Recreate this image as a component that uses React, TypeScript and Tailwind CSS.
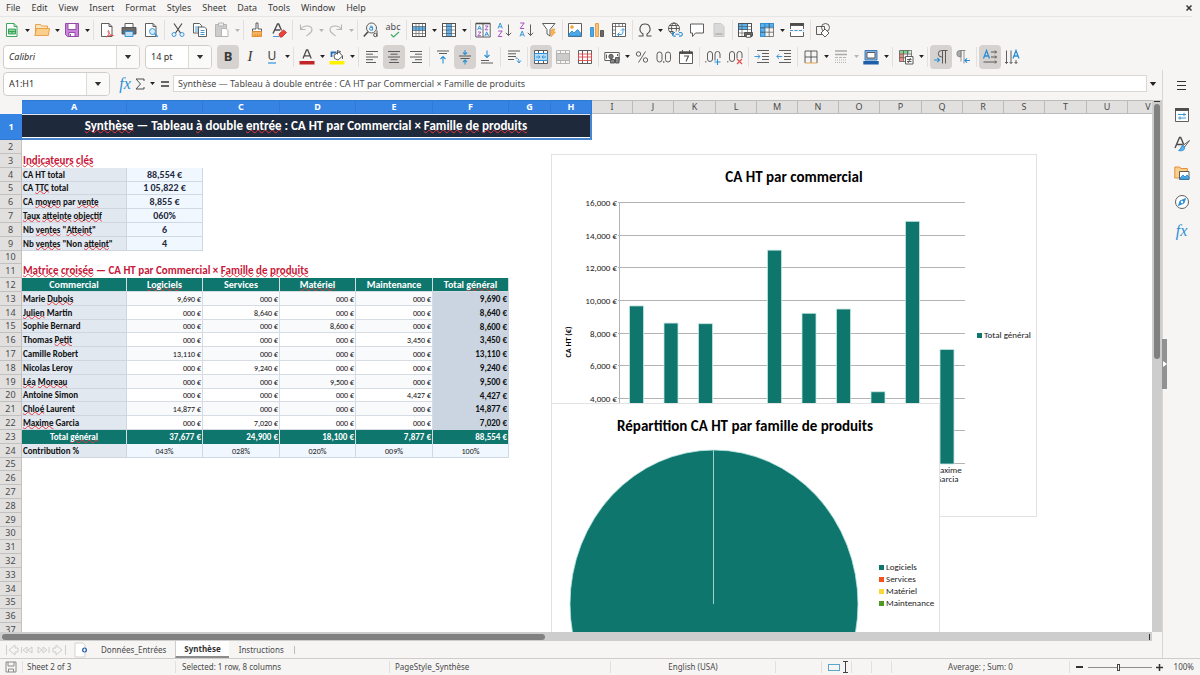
import type { ReactNode } from "react";
import { clsx } from "clsx";

type Tool = {
  label: string;
  icon: ReactNode;
  drop?: boolean;
  active?: boolean;
  disabled?: boolean;
};

const GREY = "#4d4d4d";
const BLUE = "#2a8fd6";

function Svg({ children }: { children: ReactNode }) {
  return (
    <svg viewBox="0 0 16 16" className="size-4 shrink-0" fill="none" stroke={GREY} strokeWidth="0.9">
      {children}
    </svg>
  );
}

function Caret({ className }: { className?: string }) {
  return (
    <svg viewBox="0 0 8 5" className={clsx("shrink-0", className)} fill="currentColor">
      <path d="M0 0h8L4 5z" />
    </svg>
  );
}

const GRID = "M1.5 1.5h13v13h-13zM1.5 5.8h13M1.5 10.2h13M5.8 1.5v13M10.2 1.5v13";

const STANDARD: Tool[][] = [
  [
    {
      label: "New",
      drop: true,
      icon: (
        <Svg>
          <path d="M2.5 1.5h7.5l3 3v10h-10.5z" fill="#fff" stroke="#2c9c50" />
          <path d="M10 1.5v3h3" stroke="#2c9c50" />
          <path d="M4.5 7h7v5h-7z" fill="#8fd3a0" stroke="#2c9c50" />
          <path d="M4.5 9.5h7M8 9.5v2.5" stroke="#2c9c50" />
        </Svg>
      ),
    },
    {
      label: "Open",
      drop: true,
      icon: (
        <Svg>
          <path d="M1.5 13.5v-11h5l1 1.5h6v2.5" fill="#fbe3bd" stroke="#e79a3c" />
          <path d="M.8 13.5l1.7-7h13l-1.2 7z" fill="#f9cf8b" stroke="#e79a3c" />
        </Svg>
      ),
    },
    {
      label: "Save",
      drop: true,
      icon: (
        <Svg>
          <path d="M1.5 1.5h13v13h-11l-2-2z" fill="#c884d8" stroke="#8e3fa6" />
          <path d="M4 1.5h8v6h-8z" fill="#fff" stroke="#8e3fa6" />
          <path d="M5 10.5h6v4h-6z" fill="#fff" stroke="#8e3fa6" />
          <path d="M6.5 12v2.5" stroke="#8e3fa6" />
        </Svg>
      ),
    },
  ],
  [
    {
      label: "Export as PDF",
      icon: (
        <Svg>
          <path d="M2.5 1.5h7.5l3 3v10h-10.5z" fill="#fff" />
          <path d="M10 1.5v3h3" />
          <path d="M7 15c3-2 4-5 2.5-6.5-1.5 0 0 4.5 5 5-2.5-.5-5.500 0-7.500 1.500z" fill="#fff" stroke="#e04a4a" />
        </Svg>
      ),
    },
    {
      label: "Print",
      icon: (
        <Svg>
          <path d="M4 5v-3.500h8v3.500" fill="#fff" />
          <path d="M1 5.500h14v6.500h-14z" fill="#6a6a6a" />
          <path d="M4 9.500h8v5h-8z" fill="#bfe0f5" stroke={BLUE} />
        </Svg>
      ),
    },
    {
      label: "Print Preview",
      icon: (
        <Svg>
          <path d="M2.500 1.500h7.500l3 3v10h-10.500z" fill="#fff" />
          <path d="M10 1.500v3h3" />
          <circle cx="9.500" cy="9.500" r="3" fill="#d7ecfa" stroke={BLUE} />
          <path d="M11.700 11.700l3 3" stroke={BLUE} strokeWidth="1.400" />
        </Svg>
      ),
    },
  ],
  [
    {
      label: "Cut",
      icon: (
        <Svg>
          <path d="M4 1.500l6.500 9.500M12 1.500l-6.500 9.500" strokeWidth="1.200" />
          <circle cx="4" cy="12.500" r="2" stroke={BLUE} />
          <circle cx="12" cy="12.500" r="2" stroke={BLUE} />
        </Svg>
      ),
    },
    {
      label: "Copy",
      icon: (
        <Svg>
          <path d="M1.500 1.500h6l2 2v7.500h-8z" fill="#fff" />
          <path d="M3 5h4M3 7h3M3 9h3" stroke={BLUE} />
          <path d="M6.500 5h6l2 2v7.500h-8z" fill="#fff" />
          <path d="M8.500 8.500h4M8.500 10.500h4M8.500 12.500h4" stroke={BLUE} />
        </Svg>
      ),
    },
    {
      label: "Paste",
      drop: true,
      disabled: true,
      icon: (
        <Svg>
          <path d="M1.500 2.500h11v12h-11z" fill="#ccc" stroke="#b0b0b0" />
          <path d="M4.500 1h5v3h-5z" fill="#eee" stroke="#b0b0b0" />
          <path d="M7.500 6.500h4.500l2 2v6h-6.500z" fill="#fff" stroke="#b0b0b0" />
        </Svg>
      ),
    },
  ],
  [
    {
      label: "Clone Formatting",
      icon: (
        <Svg>
          <path d="M7 1h2v6h3.500v2.500h-9v-2.500h3.500z" fill="#fff" />
          <path d="M3.500 9.500h9v5h-9.500z" fill="#f6b35f" stroke="#e0892c" />
          <path d="M6 12v2.500M8.500 12v2.500M11 12v2.500" stroke="#e0892c" />
        </Svg>
      ),
    },
    {
      label: "Clear Direct Formatting",
      icon: (
        <Svg>
          <path d="M2 11.500l4.500-9.500h1.200l2.800 6.500M4 8h5" strokeWidth="1.400" />
          <path d="M2 14.500h6" stroke={BLUE} />
          <path d="M8 12l4.500-4 3 2.500-4.500 4.500h-2z" fill="#e8453c" stroke="#d03030" />
        </Svg>
      ),
    },
  ],
  [
    {
      label: "Undo",
      drop: true,
      disabled: true,
      icon: (
        <Svg>
          <path d="M2.500 2.500v5h5M2.500 7.500c3-5 11-4.500 11.500 0 .3 3-3 4-5.500 6.500" stroke="#b5b5b5" strokeWidth="1.100" />
        </Svg>
      ),
    },
    {
      label: "Redo",
      drop: true,
      disabled: true,
      icon: (
        <Svg>
          <path d="M13.500 2.500v5h-5M13.500 7.500c-3-5-11-4.500-11.500 0-.3 3 3 4 5.500 6.500" stroke="#b5b5b5" strokeWidth="1.100" />
        </Svg>
      ),
    },
  ],
  [
    {
      label: "Find and Replace",
      icon: (
        <Svg>
          <circle cx="8.500" cy="6" r="5" />
          <path d="M5 9.800l-4.200 4.700" strokeWidth="1.600" />
          <circle cx="8" cy="6.800" r="1.500" stroke={BLUE} />
          <path d="M6.800 4.200h2.200l.6.800v3.500" stroke={BLUE} />
          <circle cx="12.300" cy="13" r="1.700" />
          <path d="M14 8.500v6.300" />
        </Svg>
      ),
    },
    {
      label: "Spelling",
      icon: (
        <span className="flex flex-col items-center font-['Noto_Sans'] text-[9px] leading-[8px] text-[#4d4d4d]">
          abc
          <svg viewBox="0 0 10 7" className="h-[7px] w-[10px] self-end" fill="none" stroke="#3aaa63" strokeWidth="1.200">
            <path d="M1 3.500l2.500 2.500 5.500-5" />
          </svg>
        </span>
      ),
    },
  ],
  [
    {
      label: "Row",
      drop: true,
      icon: (
        <Svg>
          <path d="M1.500 1.500h13v13h-13z" fill="#fff" />
          <path d="M1.500 4.500h13v4h-13z" fill="#5db2ee" stroke="none" />
          <path d="M1.500 4.500h13M1.500 8.500h13M1.500 11.500h13M5 1.500v13M8 1.500v13M11.500 1.500v13" strokeWidth="0.600" />
          <path d="M1.500 1.500h13v13h-13z" />
        </Svg>
      ),
    },
    {
      label: "Column",
      drop: true,
      icon: (
        <Svg>
          <path d="M1.500 1.500h13v13h-13z" fill="#fff" />
          <path d="M5.500 1.500h5v13h-5z" fill="#5db2ee" stroke="none" />
          <path d="M1.500 4.500h13M1.500 8h13M1.500 11.500h13M5.500 1.500v13M10.500 1.500v13" strokeWidth="0.600" />
          <path d="M1.500 1.500h13v13h-13z" />
        </Svg>
      ),
    },
  ],
  [
    {
      label: "Sort",
      icon: (
        <Svg>
          <path d="M.8 1.500h14.400v13.500h-14.400zM8 1.500v13.500" fill="#fff" />
          <path d="M.8 1.500h14.400" strokeWidth="1.600" />
          <path d="M2.600 8l1.900-4.200 1.900 4.200M3.300 6.700h2.400M9.800 14l1.900-4.200 1.900 4.200M10.500 12.700h2.400" stroke={BLUE} />
          <path d="M2.800 10h3.200l-3.200 3.800h3.200M10 4h3.200l-3.200 3.800h3.200" stroke="#a23fc0" />
        </Svg>
      ),
    },
    {
      label: "Sort Ascending",
      icon: (
        <Svg>
          <path d="M1 6.500l2.200-5.500 2.200 5.500M1.800 4.800h2.900" stroke={BLUE} />
          <path d="M1.200 9h4l-4 5.500h4" stroke="#a23fc0" />
          <path d="M11.500 2.500v11M8.800 10.800l2.700 2.700 2.700-2.700" />
        </Svg>
      ),
    },
    {
      label: "Sort Descending",
      icon: (
        <Svg>
          <path d="M1 14.500l2.200-5.500 2.200 5.500M1.800 12.800h2.900" stroke={BLUE} />
          <path d="M1.200 1h4l-4 5.500h4" stroke="#a23fc0" />
          <path d="M11.500 2.500v11M8.800 10.800l2.700 2.700 2.700-2.700" />
        </Svg>
      ),
    },
    {
      label: "AutoFilter",
      icon: (
        <Svg>
          <path d="M1.500 1.500h12.500l-5 6v6.500l-3-2v-4.500z" fill="#fff" />
          <path d="M11 7h3l-1.500 3h2l-4.500 5 1-4h-1.500z" fill="#f9b552" stroke="#ec9a2f" strokeWidth="0.600" />
        </Svg>
      ),
    },
  ],
  [
    {
      label: "Image",
      icon: (
        <Svg>
          <path d="M1.500 1.500h13v13h-13z" fill="#fff" />
          <circle cx="5" cy="5" r="1.300" fill="#f9b552" stroke="#ec9a2f" />
          <path d="M2 12l3-3 2 2 3.500-3.500 3.500 4v2.500h-12z" fill="#4fa8e4" stroke={BLUE} />
        </Svg>
      ),
    },
    {
      label: "Chart",
      icon: (
        <Svg>
          <path d="M1.500 5.500h3v9h-3z" fill="#4fa8e4" stroke={BLUE} />
          <path d="M6.500 1.500h3v13h-3z" fill="#f9c27a" stroke="#e79a3c" />
          <path d="M11.500 8.500h3v6h-3z" fill="#6a6a6a" />
        </Svg>
      ),
    },
    {
      label: "Pivot Table",
      icon: (
        <Svg>
          <path d="M1.500 1.500h13v13h-13z" fill="#fff" />
          <path d="M1.500 4.500h13M4.500 1.500v13M8 1.500v3M11.500 1.500v3M1.500 8h3M1.500 11.500h3" strokeWidth="0.700" />
          <path d="M7 12.500h3c2 0 2-2 2-5.500M10 8.500l2-2 2 2M8.500 10.500l-2 2 2 2" stroke={BLUE} />
        </Svg>
      ),
    },
  ],
  [
    {
      label: "Special Character",
      drop: true,
      icon: (
        <Svg>
          <path d="M1.500 14h4.500v-2c-5-3-3.500-10 2-10s7 7 2 10v2h4.500" strokeWidth="1.100" />
        </Svg>
      ),
    },
    {
      label: "Hyperlink",
      icon: (
        <Svg>
          <circle cx="7" cy="6.500" r="5.500" />
          <ellipse cx="7" cy="6.500" rx="2.500" ry="5.500" />
          <path d="M1.500 6.500h11M2.500 3.500h9M2.500 9.500h4" />
          <path d="M7 9.500h8v6h-8z" fill="#f6f5f4" stroke="none" />
          <path d="M8 10.500h-.8a1.800 1.800 0 0 0 0 3.600h1.500M12 10.500h1.500a1.800 1.800 0 0 1 0 3.600h-1.500M8.500 12.300h4" stroke={BLUE} strokeWidth="1.100" />
        </Svg>
      ),
    },
    {
      label: "Comment",
      icon: (
        <Svg>
          <path d="M1.500 2h13v9h-8l-3 3.500v-3.500h-2z" fill="#fff" />
        </Svg>
      ),
    },
    {
      label: "Headers and Footers",
      disabled: true,
      icon: (
        <Svg>
          <path d="M3 1.500h7l3 3v10h-10z" fill="#d9d9d9" stroke="#c4c4c4" />
          <path d="M4.500 11h7v2h-7z" fill="#bbb" stroke="none" />
        </Svg>
      ),
    },
  ],
  [
    {
      label: "Define Print Area",
      icon: (
        <Svg>
          <path d="M1.500 1.500h13v13h-13z" fill="#fff" />
          <path d="M1.500 1.500h9v6h-9z" fill="#5db2ee" stroke={BLUE} />
          <path d="M1.500 4.500h13M1.500 7.500h13M1.500 11h13M5 1.500v13M10.500 1.500v13" strokeWidth="0.600" />
          <path d="M1.500 1.500h13v13h-13z" />
          <path d="M7.500 10.500h8v3.500h-8z" fill="#6a6a6a" />
          <path d="M9.300 12.500h4.400v2.800h-4.400z" fill="#fff" />
        </Svg>
      ),
    },
    {
      label: "Freeze Rows and Columns",
      drop: true,
      icon: (
        <Svg>
          <path d={GRID} strokeWidth="0.700" />
          <path d="M1.500 1.500h4.300v13h-4.300zM5.800 1.500h8.700v3.500h-8.700z" fill="#5db2ee" stroke={BLUE} />
          <path d="M1.500 5.800h4.300M1.500 10.200h4.300M10.200 1.500v4" />
        </Svg>
      ),
    },
    {
      label: "Split Window",
      icon: (
        <Svg>
          <path d="M1.500 1.500h13v13h-13z" fill="#fff" />
          <path d="M1.500 1.500h13v2h-13z" fill={GREY} />
          <path d="M0 8.500h16" stroke="#f6f5f4" strokeWidth="3" />
          <path d="M1 8.500h14" stroke={BLUE} strokeDasharray="3 1.500" />
        </Svg>
      ),
    },
  ],
  [
    {
      label: "Show Draw Functions",
      icon: (
        <Svg>
          <path d="M1.500 4.500h8v8h-8z" />
          <circle cx="10.500" cy="5.500" r="4" />
          <path d="M10 7l4 4-4 4-4-4z" fill="#fff" />
        </Svg>
      ),
    },
  ],
];

const FORMATTING: Tool[][] = [
  [
    {
      label: "Bold",
      active: true,
      icon: <span className="text-[13px] font-bold text-[#3a3a3a]">B</span>,
    },
    { label: "Italic", icon: <span className="font-['Liberation_Serif'] text-[15px] text-[#3a3a3a] italic">I</span> },
    {
      label: "Underline",
      drop: true,
      icon: <span className="border-b-2 border-[#7dbbe8] text-[12px] leading-[13px] text-[#3a3a3a]">U</span>,
    },
  ],
  [
    {
      label: "Font Color",
      drop: true,
      icon: (
        <Svg>
          <path d="M4 9.500l3.500-8.500h1.200l3.500 8.500M5.300 6.800h5.600" strokeWidth="1.300" />
          <path d="M.5 12h15v3.500h-15z" fill="#c22525" stroke="none" />
        </Svg>
      ),
    },
    {
      label: "Background Color",
      drop: true,
      icon: (
        <Svg>
          <path d="M5 6l5-3 3.500 4-4.500 4-3.500-1.500z" fill="#fff" />
          <path d="M8.500 5.500v-4l3.500 1.500M13.500 7v3" />
          <path d="M2.500 8v-4.500h5" stroke="#2f6fb5" strokeWidth="1.800" />
          <path d="M.5 12h15v3.500h-15z" fill="#fff200" stroke="none" />
        </Svg>
      ),
    },
  ],
  [
    {
      label: "Align Left",
      icon: (
        <Svg>
          <path d="M2 2.500h12M2 5.200h7M2 8h12M2 10.700h7M2 13.500h10" />
        </Svg>
      ),
    },
    {
      label: "Center Horizontally",
      active: true,
      icon: (
        <Svg>
          <path d="M2 2.500h12M4.500 5.200h7M2 8h12M4.500 10.700h7M3 13.500h10" />
        </Svg>
      ),
    },
    {
      label: "Align Right",
      icon: (
        <Svg>
          <path d="M2 2.500h12M7 5.200h7M2 8h12M7 10.700h7M4 13.500h10" />
        </Svg>
      ),
    },
  ],
  [
    {
      label: "Align Top",
      icon: (
        <Svg>
          <path d="M2 2h12M4 4.500h8" />
          <path d="M8 14.500v-7M5.500 10l2.500-2.500 2.500 2.500" stroke={BLUE} strokeWidth="1.100" />
        </Svg>
      ),
    },
    {
      label: "Center Vertically",
      active: true,
      icon: (
        <Svg>
          <path d="M2 7h12M3.500 9.500h9" />
          <path d="M8 1v4.500M6 3.500l2 2 2-2M8 15.500v-4.500M6 13l2-2 2 2" stroke={BLUE} strokeWidth="1.100" />
        </Svg>
      ),
    },
    {
      label: "Align Bottom",
      icon: (
        <Svg>
          <path d="M2 14h12M2 11.500h8" />
          <path d="M8 1.500v7M5.500 6l2.500 2.500 2.500-2.500" stroke={BLUE} strokeWidth="1.100" />
        </Svg>
      ),
    },
  ],
  [
    {
      label: "Wrap Text",
      icon: (
        <Svg>
          <path d="M2 2h12M2 4.800h8M2 7.500h8M2 10.500h6" />
          <path d="M9.500 9c3 0 3.500 1.500 3.500 4.500M11 11.500l2 2.500 2-2.500" stroke={BLUE} />
        </Svg>
      ),
    },
  ],
  [
    {
      label: "Merge and Center Cells",
      active: true,
      icon: (
        <Svg>
          <path d="M1.500 1.500h13v13h-13zM1.500 4.500h13M1.500 11.500h13M5.500 1.500v3M10.500 1.500v3M5.500 11.500v3M10.500 11.500v3" fill="#fff" />
          <path d="M1.500 4.500h13v7h-13z" fill="#b9dcf5" stroke={BLUE} />
          <path d="M3 8h4M9 8h4M5.500 6.500l1.500 1.500-1.500 1.500M10.500 6.500l-1.500 1.500 1.500 1.500" stroke={BLUE} />
        </Svg>
      ),
    },
    {
      label: "Merge Cells",
      disabled: true,
      icon: (
        <Svg>
          <path d="M1.500 1.500h13v13h-13zM1.500 4.500h13M1.500 11.500h13M5.500 1.500v3M10.500 1.500v3M5.500 11.500v3M10.500 11.500v3" stroke="#b0b0b0" />
          <path d="M1.500 4.500h13v7h-13z" fill="#ccc" stroke="#b0b0b0" />
        </Svg>
      ),
    },
    {
      label: "Unmerge Cells",
      icon: (
        <Svg>
          <path d="M1.500 1.500h13v13h-13zM5.500 1.500v13M10.500 1.500v13" fill="#fff" />
          <path d="M1.500 5h13v6.500h-13zM5.500 5v6.500M10.500 5v6.500M1.500 8h13" stroke="#e04a4a" />
        </Svg>
      ),
    },
  ],
  [
    {
      label: "Format as Currency",
      drop: true,
      icon: (
        <Svg>
          <path d="M.8 3.500h14.400v8h-14.400z" fill="#fff" />
          <circle cx="7" cy="7.500" r="2.200" fill="#777" />
          <path d="M2.500 5.500v4M13.500 5v2" />
          <path d="M6.500 10.500h4v3.500h-4zM11.500 8.500h3.500v5.500h-3.500z" fill="#888" />
        </Svg>
      ),
    },
    {
      label: "Format as Percent",
      icon: (
        <Svg>
          <circle cx="4.500" cy="5" r="2.200" />
          <circle cx="11.500" cy="11" r="2.200" />
          <path d="M11.500 2.500l-7 11" />
        </Svg>
      ),
    },
    {
      label: "Format as Number",
      icon: (
        <Svg>
          <rect x="1" y="3" width="5" height="10" rx="2.500" />
          <rect x="9.500" y="3" width="5" height="10" rx="2.500" />
          <path d="M7.800 12v2" />
        </Svg>
      ),
    },
    {
      label: "Format as Date",
      icon: (
        <Svg>
          <path d="M1.500 3h13v11.500h-13z" fill="#fff" />
          <path d="M1.500 3h13v1.500h-13zM4.500 1v2M11.500 1v2" fill={GREY} />
          <path d="M6 7h4.500l-2.500 5.500" strokeWidth="1.100" />
        </Svg>
      ),
    },
  ],
  [
    {
      label: "Add Decimal Place",
      icon: (
        <Svg>
          <path d="M.8 12v1.500" />
          <rect x="2.500" y="2.500" width="5" height="10" rx="2.500" />
          <path d="M10 11.500v-6.500a2.500 2.500 0 0 1 5 0v4" />
          <path d="M9.500 13h6M12.500 10v6" stroke={BLUE} strokeWidth="1.100" />
        </Svg>
      ),
    },
    {
      label: "Delete Decimal Place",
      icon: (
        <Svg>
          <path d="M.8 12v1.500" />
          <rect x="2.500" y="2.500" width="5" height="10" rx="2.500" />
          <path d="M10 9.500v-4.500a2.500 2.500 0 0 1 5 0v4" />
          <path d="M10 10l5 5M15 10l-5 5" stroke="#e04a4a" strokeWidth="1.100" />
        </Svg>
      ),
    },
  ],
  [
    {
      label: "Increase Indent",
      icon: (
        <Svg>
          <path d="M3 1.500h12M8 4.500h7M8 7.500h7M8 10.500h7M3 13.500h12" />
          <path d="M.5 7.500h5.500M3.800 5.300l2.200 2.200-2.200 2.200" stroke={BLUE} />
        </Svg>
      ),
    },
    {
      label: "Decrease Indent",
      icon: (
        <Svg>
          <path d="M3 1.500h12M8 4.500h7M8 7.500h7M8 10.500h7M3 13.500h12" />
          <path d="M.8 7.500h5.500M3 5.300l-2.200 2.200 2.200 2.200" stroke={BLUE} />
        </Svg>
      ),
    },
  ],
  [
    {
      label: "Borders",
      drop: true,
      icon: (
        <Svg>
          <path d="M2 2h12v12M2 2v12M8 2v12M2 8h12" />
          <path d="M2 14h12" stroke="#e79a3c" />
        </Svg>
      ),
    },
    {
      label: "Border Style",
      drop: true,
      disabled: true,
      icon: (
        <Svg>
          <path d="M2 2h12M2 5.500h12" stroke="#aaa" strokeWidth="1.400" />
          <path d="M2 8.500h12" stroke="#aaa" strokeDasharray="3 1" />
          <path d="M2 11h12M2 13.500h12" stroke="#aaa" strokeDasharray="1 1" />
        </Svg>
      ),
    },
    {
      label: "Border Color",
      drop: true,
      icon: (
        <Svg>
          <path d="M2 1.500h12v9.500h-12z" fill="#8bb4dd" stroke="#2f6fb5" />
          <path d="M4 3.500h8v5.500h-8z" fill="#fff" />
          <path d="M.3 12h15.400v3.500h-15.400z" fill="#1d5fa8" stroke="none" />
        </Svg>
      ),
    },
  ],
  [
    {
      label: "Conditional",
      drop: true,
      icon: (
        <Svg>
          <path d="M1.500 1.500h10v3h-10z" fill="#7ed08c" stroke="none" />
          <path d="M1.500 4.500h3.500v8h-3.500z" fill="#f08a80" stroke="none" />
          <path d="M1.500 1.500h12v11h-12zM1.500 5h12M1.500 8.700h12M5.500 1.500v11M9.500 1.500v11" strokeWidth="0.700" />
          <path d="M7.500 7.500h7.500v7.500h-7.500z" fill="#fff" />
          <path d="M9 10.500h4.500M9 12.500h4.500M12.500 9l-2.500 5" />
        </Svg>
      ),
    },
  ],
  [
    {
      label: "Left-To-Right",
      active: true,
      icon: (
        <Svg>
          <path d="M14.500 1.500h-6a3.200 3.200 0 0 0 0 6.400h1M9.500 1.500v13M12.500 1.500v13" />
          <path d="M1 11h5.500M4.300 8.800l2.200 2.200-2.200 2.200" stroke={BLUE} strokeWidth="1.100" />
        </Svg>
      ),
    },
    {
      label: "Right-To-Left",
      icon: (
        <Svg>
          <path d="M9 1.500h-4a3.200 3.200 0 0 0 0 6.400h1v-6.400" fill="#aaa" stroke="#888" />
          <path d="M10.500 1.500h-5.500M6 1.500v11M9 1.500v13" stroke="#888" />
          <path d="M15 11.500h-5M12 9.300l-2.200 2.200 2.200 2.200" stroke={BLUE} strokeWidth="1.100" />
        </Svg>
      ),
    },
  ],
  [
    {
      label: "Text direction from left to right",
      active: true,
      icon: (
        <Svg>
          <path d="M1.500 9.500l3-8 3 8M2.500 7h4" stroke={BLUE} strokeWidth="1.300" />
          <path d="M9 3h5.500M13 1.500l1.500 1.500-1.500 1.500M9 8h5.500M13 6.500l1.500 1.500-1.500 1.500M1.500 13h13M13 11.500l1.500 1.500-1.500 1.500" />
        </Svg>
      ),
    },
    {
      label: "Text direction from top to bottom",
      icon: (
        <Svg>
          <path d="M9 9.500l3-8 3 8M10 7h4" stroke={BLUE} strokeWidth="1.300" />
          <path d="M2.500 1.500v13M1 13l1.500 1.500 1.500-1.500M7 1.500v13M5.500 13l1.500 1.500 1.500-1.500M12 11v3.500M10.500 13l1.500 1.500 1.500-1.500" />
        </Svg>
      ),
    },
  ],
];

const MENUS = ["File", "Edit", "View", "Insert", "Format", "Styles", "Sheet", "Data", "Tools", "Window", "Help"];

// Words between underscores are flagged by the spell checker
const KPIS: [string, string][] = [
  ["CA HT total", "88,554 €"],
  ["CA _TTC_ total", "1 05,822 €"],
  ["CA _moyen_ par _vente_", "8,855 €"],
  ["_Taux_ _atteinte_ _objectif_", "060%"],
  ['Nb _ventes_ "_Atteint_"', "6"],
  ['Nb _ventes_ "Non _atteint_"', "4"],
];

const FAMILIES = ["_Logiciels_", "Services", "_Matériel_", "Maintenance", "Total _général_"];

const SALES: [string, ...string[]][] = [
  ["Marie _Dubois_", "9,690 €", "000 €", "000 €", "000 €", "9,690 €"],
  ["_Julien_ Martin", "000 €", "8,640 €", "000 €", "000 €", "8,640 €"],
  ["Sophie Bernard", "000 €", "000 €", "8,600 €", "000 €", "8,600 €"],
  ["Thomas _Petit_", "000 €", "000 €", "000 €", "3,450 €", "3,450 €"],
  ["Camille Robert", "13,110 €", "000 €", "000 €", "000 €", "13,110 €"],
  ["Nicolas Leroy", "000 €", "9,240 €", "000 €", "000 €", "9,240 €"],
  ["_Léa_ _Moreau_", "000 €", "000 €", "9,500 €", "000 €", "9,500 €"],
  ["Antoine Simon", "000 €", "000 €", "000 €", "4,427 €", "4,427 €"],
  ["_Chloé_ Laurent", "14,877 €", "000 €", "000 €", "000 €", "14,877 €"],
  ["_Maxime_ Garcia", "000 €", "7,020 €", "000 €", "000 €", "7,020 €"],
];

const TOTALS = ["37,677 €", "24,900 €", "18,100 €", "7,877 €", "88,554 €"];
const SHARES = ["043%", "028%", "020%", "009%", "100%"];
const BAR_VALUES = [9690, 8640, 8600, 3450, 13110, 9240, 9500, 4427, 14877, 7020];

const COLUMNS = "ABCDEFGHIJKLMNOPQRSTUV".split("");
const COLUMN_WIDTHS = [105, 76, 77, 76, 77, 76, 42, 41, 41, 41, 42, 41, 41, 41, 41, 42, 41, 41, 41, 42, 41, 41];

function ToolButton({ tool }: { tool: Tool }) {
  return (
    <div className="flex items-center">
      <button
        aria-label={tool.label}
        disabled={tool.disabled}
        className={clsx(
          "flex h-6 w-[22px] items-center justify-center rounded",
          tool.active && "bg-[#d5d2cf]",
        )}
      >
        {tool.icon}
      </button>
      {tool.drop && (
        <button
          aria-label={`${tool.label} options`}
          disabled={tool.disabled}
          className={clsx("flex h-6 w-2 items-center justify-center", tool.disabled ? "text-[#b5b5b5]" : "text-[#222]")}
        >
          <Caret className="h-[3px] w-[5px]" />
        </button>
      )}
    </div>
  );
}

function ToolGroups({ groups }: { groups: Tool[][] }) {
  return (
    <>
      {groups.map((group, i) => (
        <div key={i} className="flex items-center">
          {i > 0 && (
            <span className={clsx("flex justify-center", i > 5 && groups === STANDARD ? "w-1" : "w-[5px]")}>
              <span className="h-5 w-px bg-[#e2e0de]" />
            </span>
          )}
          {group.map((tool) => (
            <ToolButton key={tool.label} tool={tool} />
          ))}
        </div>
      ))}
    </>
  );
}

function Combo({ label, value, className, italic }: { label: string; value: string; className: string; italic?: boolean }) {
  return (
    <div className={clsx("flex h-6 shrink-0 overflow-hidden rounded border border-[#d0cdca] bg-white", className)}>
      <input
        aria-label={label}
        defaultValue={value}
        className={clsx("min-w-0 flex-1 pl-[5px] text-[9px] text-[#2e2e2e] outline-none", italic && "italic")}
      />
      <button
        aria-label={`${label} list`}
        className="flex w-[23px] items-center justify-center border-l border-[#dddad7] bg-[#fafaf9] text-[#333]"
      >
        <Caret className="h-1 w-2" />
      </button>
    </div>
  );
}

function Spell({ text }: { text: string }) {
  return (
    <>
      {text.split("_").map((part, i) =>
        i % 2 === 1 ? (
          <span key={i} className="underline decoration-[#e5393f] decoration-wavy decoration-1 underline-offset-[-1px] [text-decoration-skip-ink:none]">
            {part}
          </span>
        ) : (
          part
        ),
      )}
    </>
  );
}

function Cell({ text, className, span }: { text: string; className?: string; span?: number }) {
  return (
    <td colSpan={span} className={clsx("overflow-hidden p-0 leading-[12px] whitespace-nowrap", className)}>
      <Spell text={text} />
    </td>
  );
}

function rowCells(row: number) {
  if (row === 3)
    return <Cell span={6} text="_Indicateurs_ _clés_" className="pl-px text-[11px] font-bold text-[#c8173a]" />;
  if (row >= 4 && row <= 9) {
    const [label, value] = KPIS[row - 4];
    return (
      <>
        <Cell text={label} className="border-r border-b border-[#cfd6e0] bg-[#e2e8f0] pl-px text-[9px] font-bold text-[#111]" />
        <Cell text={value} className="border-r border-b border-[#cfd9e6] bg-[#f0f7ff] text-center text-[10px] font-bold text-[#1e293b]" />
      </>
    );
  }
  if (row === 11)
    return (
      <Cell
        span={6}
        text="_Matrice_ _croisée_ — CA HT par Commercial × _Famille_ _de_ _produits_"
        className="pl-px text-[11px] font-bold text-[#c8173a]"
      />
    );
  if (row === 12)
    return (
      <>
        {["Commercial", ...FAMILIES].map((name) => (
          <Cell key={name} text={name} className="border-r border-b border-[#d5dde3] bg-[#0f766e] text-center text-[10px] font-bold text-white" />
        ))}
      </>
    );
  if (row >= 13 && row <= 22) {
    const [name, ...values] = SALES[row - 13];
    return (
      <>
        <Cell text={name} className="border-r border-b border-[#cfd6e0] bg-[#e2e8f0] pl-px text-[9px] font-bold text-[#111]" />
        {values.map((value, i) => (
          <Cell
            key={i}
            text={value}
            className={clsx(
              "border-r pr-px text-right text-[#111]",
              i === 4
                ? "border-[#cbd5e1] bg-[#cbd5e1] text-[9px] font-bold"
                : clsx("border-b border-[#d6dce4] text-[8px]", row % 2 ? "bg-[#f8fafc]" : "bg-white"),
            )}
          />
        ))}
      </>
    );
  }
  if (row === 23)
    return (
      <>
        <Cell text="Total _général_" className="border-r border-[#d5dde3] bg-[#0f766e] text-center text-[9px] font-bold text-white" />
        {TOTALS.map((value) => (
          <Cell key={value} text={value} className="border-r border-[#d5dde3] bg-[#0f766e] pr-px text-right text-[9px] font-bold text-white" />
        ))}
      </>
    );
  if (row === 24)
    return (
      <>
        <Cell text="Contribution %" className="border-r border-b border-[#cfd6e0] bg-[#e2e8f0] pl-px text-[9px] font-bold text-[#111]" />
        {SHARES.map((value) => (
          <Cell key={value} text={value} className="border-r border-b border-[#cfd9e6] bg-[#f0f7ff] text-center text-[8px] text-[#222]" />
        ))}
      </>
    );
  return null;
}

function SheetGrid() {
  return (
    <table className="w-max table-fixed border-separate border-spacing-0 font-[Carlito,Lato,sans-serif]">
      <colgroup>
        <col className="w-[22px]" />
        {COLUMN_WIDTHS.map((width, i) => (
          <col key={i} style={{ width }} />
        ))}
      </colgroup>
      <thead className="font-['Noto_Sans',sans-serif] text-[9px] leading-[12px]">
        <tr className="h-[14px]">
          <td className="bg-[#f6f5f4] p-0" />
          {COLUMNS.map((name, i) => (
            <th
              key={name}
              scope="col"
              className={clsx(
                "border-t border-r border-b p-0",
                i < 8
                  ? "border-[#2f79d2] bg-[#3584e4] font-bold text-white"
                  : "border-[#bdbbb9] bg-[#e1e0df] font-normal text-[#4a4a4a]",
              )}
            >
              {name}
            </th>
          ))}
        </tr>
      </thead>
      <tbody>
        <tr className="h-[26px]">
          <th scope="row" className="border-b border-[#2f79d2] bg-[#3584e4] p-0 font-['Noto_Sans',sans-serif] text-[9px] font-bold text-white">
            1
          </th>
          <td colSpan={8} className="border-r-2 border-b-2 border-[#4a86cf] bg-white p-0 pb-px">
            <div className="flex h-[23px] items-center justify-center border-t border-[#dfe7f2] bg-[#1e293b] text-[13px] font-bold text-white">
              <p>
                <Spell text="_Synthèse_ — Tableau _à_ double _entrée_ : CA HT par Commercial × _Famille_ _de_ _produits_" />
              </p>
            </div>
          </td>
        </tr>
        {Array.from({ length: 36 }, (_, i) => i + 2).map((row) => (
          <tr key={row} className="h-[14px] [&:nth-child(5n)]:h-[13px]">
            <th
              scope="row"
              className="border-r border-b border-[#c3c1bf] bg-[#e1e0df] p-0 font-['Noto_Sans',sans-serif] text-[9px] leading-[12px] font-normal text-[#4a4a4a]"
            >
              {row}
            </th>
            {rowCells(row)}
          </tr>
        ))}
      </tbody>
    </table>
  );
}

function BarChart() {
  const zero = 310;
  const perUnit = 261 / 16000;
  return (
    <svg viewBox="0 0 487 364" className="absolute top-[54px] left-[551px] h-[364px] w-[487px] font-[Carlito,Lato,sans-serif]">
      <rect x="0.5" y="0.5" width="485" height="362" fill="#fff" stroke="#e2e2e2" />
      <text x="243" y="28" textAnchor="middle" fontSize="15" fontWeight="700">
        CA HT par commercial
      </text>
      {Array.from({ length: 9 }, (_, i) => {
        const y = Math.round(zero - i * 2000 * perUnit) - 0.5;
        return (
          <g key={i}>
            <path d={`M67 ${y}H414`} stroke="#b3b3b3" />
            <text x="66" y={y + 3} textAnchor="end" fontSize="9" fill="#222">
              {(i * 2000).toLocaleString("en-US")} €
            </text>
          </g>
        );
      })}
      <path d="M68.5 49V310" stroke="#b3b3b3" />
      {BAR_VALUES.map((value, i) => (
        <rect
          key={i}
          x={78.5 + i * 34.5}
          y={zero - value * perUnit}
          width="14"
          height={value * perUnit}
          fill="#0f766e"
          stroke="#c3e6e2"
          strokeWidth="0.8"
        />
      ))}
      <text transform="translate(20 188) rotate(-90)" textAnchor="middle" fontSize="8" fontWeight="700">
        CA HT (€)
      </text>
      <text x="396" y="319" textAnchor="middle" fontSize="9" fill="#222">
        Maxime
      </text>
      <text x="396" y="328" textAnchor="middle" fontSize="9" fill="#222">
        Garcia
      </text>
      <rect x="426" y="179" width="5" height="5" fill="#0f766e" />
      <text x="433" y="184" fontSize="9" fill="#222">
        Total général
      </text>
    </svg>
  );
}

function PieChart() {
  const legend = [
    { name: "Logiciels", color: "#0f766e" },
    { name: "Services", color: "#f4511e" },
    { name: "Matériel", color: "#fdd835" },
    { name: "Maintenance", color: "#4c9a1e" },
  ];
  return (
    <svg viewBox="0 0 389 364" className="absolute top-[303px] left-[551px] h-[364px] w-[389px] font-[Carlito,Lato,sans-serif]">
      <rect x="0.5" y="0.5" width="388" height="363" fill="#fff" stroke="#e2e2e2" />
      <text x="194" y="28" textAnchor="middle" fontSize="15" fontWeight="700">
        Répartition CA HT par famille de produits
      </text>
      <ellipse cx="163" cy="201" rx="144" ry="154" fill="#0f766e" stroke="#b9e4df" strokeWidth="0.8" />
      <path d="M162.5 47V201" stroke="#9ed3cd" />
      {legend.map((item, i) => (
        <g key={item.name}>
          <rect x="328" y={162 + i * 12} width="5" height="5" fill={item.color} />
          <text x="335" y={167 + i * 12} fontSize="9" fill="#222">
            {item.name}
          </text>
        </g>
      ))}
    </svg>
  );
}

const fx = <span className="font-['Liberation_Serif',serif] text-[16px] leading-4 text-[#2a8fd6] italic">fx</span>;

const SIDEBAR = [
  {
    label: "Properties",
    icon: (
      <Svg>
        <path d="M1.500 1.500h13v13h-13z" fill="#fff" />
        <path d="M1.500 1.500h13v2h-13z" fill={GREY} />
        <path d="M4 7.500h8M4 11h8M10 5.800v3.400M6 9.300v3.400" stroke={BLUE} />
      </Svg>
    ),
  },
  {
    label: "Styles",
    icon: (
      <Svg>
        <path d="M1 12l4.500-10.500h1.200l3 7M2.800 8.500h6" strokeWidth="1.400" />
        <path d="M15.500 4.500l-5 6.500-1.500-1.500z" fill="#fff" />
        <path d="M4.500 14.500c4 1 6.500-.5 6-3.500l-1.500-1.500c-2.500.5-1.500 4-4.500 5z" fill="#5db2ee" stroke={BLUE} />
      </Svg>
    ),
  },
  {
    label: "Gallery",
    icon: (
      <Svg>
        <path d="M.8 13v-11h5l1 1.500h6.500v9.500z" fill="#f9cf8b" stroke="#e0892c" />
        <path d="M5.500 6.500h9.500v8h-9.500z" fill="#fff" />
        <path d="M6 13l3-3 2 2 2-2 2 2v2h-9z" fill="#4fa8e4" stroke={BLUE} />
      </Svg>
    ),
  },
  {
    label: "Navigator",
    icon: (
      <Svg>
        <circle cx="8" cy="8" r="6.500" fill="#fff" />
        <path d="M11.500 4.500l-1.500 4.500-5.500 2.500 1.500-4.500z" fill={BLUE} stroke={BLUE} />
        <circle cx="8" cy="8" r="1.200" fill="#fff" stroke="none" />
      </Svg>
    ),
  },
  { label: "Functions", icon: fx },
];

function SheetTabs() {
  return (
    <nav className="flex h-[17px] shrink-0 items-center text-[8px] text-[#4a4a4a]">
      <svg viewBox="0 0 62 12" className="ml-[5px] h-3 w-[62px]" fill="none" stroke="#cfcdcb">
        <path d="M1.500 1v10M10 1l-6 5 6 5v-3h3v-4h-3zM22 3l-4 3 4 3zM27 3l-4 3 4 3zM16.500 3v6M33 3l4 3-4 3zM38 3l4 3-4 3zM44 3v6M51 1l6 5-6 5v-3h-3v-4h3zM60.500 1v10" />
      </svg>
      <button aria-label="Add sheet" className="ml-[6px] flex w-4 items-center">
        <svg viewBox="0 0 16 16" className="size-4">
          <path d="M2 1h8l2 2v12h-10z" fill="#fff" stroke="#d5d3d1" />
          <circle cx="11.500" cy="8" r="2.500" fill="#2b62ad" />
          <path d="M11.500 6.500v3M10 8h3" stroke="#fff" />
        </svg>
      </button>
      <button className="ml-[3px] flex h-full items-center px-[9px]">Données_Entrées</button>
      <button className="flex h-full items-center border-b-2 border-l border-[#8d8d8d] border-l-[#ccc] bg-white px-2 font-bold text-[#333]">
        Synthèse
      </button>
      <button className="flex h-full items-center px-[10px]">Instructions</button>
      <span className="h-2 w-px bg-[#bbb]" />
    </nav>
  );
}

function StatusBar() {
  return (
    <footer className="flex h-[17px] shrink-0 items-center border-t border-[#cfcdcb] text-[8px] whitespace-nowrap text-[#4a4a4a]">
      <div className="flex w-[23px] justify-center border-r border-[#e2e0de]">
        <svg viewBox="0 0 12 12" className="size-3" fill="none" stroke="#8a8a8a">
          <path d="M1 1h10v10h-10zM3 1v4h6v-4M3.500 11v-3h5v3" />
        </svg>
      </div>
      <div className="w-[153px] border-r border-[#e2e0de] pl-1">Sheet 2 of 3</div>
      <div className="w-[214px] border-r border-[#e2e0de] pl-[6px]">Selected: 1 row, 8 columns</div>
      <div className="w-[221px] border-r border-[#e2e0de] pl-[5px]">PageStyle_Synthèse</div>
      <div className="w-[165px] border-r border-[#e2e0de] text-center">English (USA)</div>
      <div className="w-[46px] border-r border-[#e2e0de]">&nbsp;</div>
      <div className="flex h-3 w-[30px] items-center gap-[3px] border-r border-[#e2e0de] pl-[6px]">
        <span className="h-[7px] w-3 border border-[#5aa5cc]" />
        <svg viewBox="0 0 5 12" className="h-3 w-[5px]" fill="none" stroke="#444">
          <path d="M0 .5h5M2.500 .5v11M0 11.500h5" />
        </svg>
      </div>
      <div className="w-5 border-r border-[#e2e0de]">&nbsp;</div>
      <div className="w-5 border-r border-[#e2e0de]">&nbsp;</div>
      <div className="flex-1 text-center">Average: ; Sum: 0</div>
      <div className="flex items-center gap-1 border-l border-[#e2e0de] pl-[6px]">
        <button aria-label="Zoom out" className="flex h-3 w-2 items-center">
          <span className="h-[2px] w-[7px] bg-[#333]" />
        </button>
        <input
          type="range"
          aria-label="Zoom"
          defaultValue={48}
          className="h-3 w-16 appearance-none bg-transparent [&::-webkit-slider-runnable-track]:h-px [&::-webkit-slider-runnable-track]:bg-[#8d8d8d] [&::-webkit-slider-thumb]:-mt-[3px] [&::-webkit-slider-thumb]:h-[7px] [&::-webkit-slider-thumb]:w-[3px] [&::-webkit-slider-thumb]:appearance-none [&::-webkit-slider-thumb]:border [&::-webkit-slider-thumb]:border-[#444] [&::-webkit-slider-thumb]:bg-white"
        />
        <button aria-label="Zoom in" className="flex h-3 w-[7px] items-center">
          <svg viewBox="0 0 7 7" className="size-[7px]" stroke="#333" strokeWidth="1.500">
            <path d="M0 3.500h7M3.500 0v7" />
          </svg>
        </button>
      </div>
      <div className="w-[37px] pr-[6px] text-right">100%</div>
    </footer>
  );
}

export default function App() {
  return (
    <div className="flex h-screen flex-col overflow-hidden bg-[#f6f5f4] font-['Noto_Sans',sans-serif]">
      <header className="mr-2 flex h-[17px] shrink-0 items-center gap-[11px] border-b border-[#e8e6e4] pl-[6px] text-[9px] text-[#3a3a3a]">
        {MENUS.map((menu) => (
          <button key={menu}>{menu}</button>
        ))}
        <button aria-label="Close document" className="ml-auto">
          <svg viewBox="0 0 6 6" className="size-[6px]" stroke="#333" strokeWidth="1.500">
            <path d="M.5 .5l5 5M5.500 .5l-5 5" />
          </svg>
        </button>
      </header>

      <div className="flex h-[26px] shrink-0 items-center pl-px">
        <ToolGroups groups={STANDARD} />
      </div>

      <div className="flex h-[27px] shrink-0 items-center pl-[3px]">
        <Combo label="Font Name" value="Calibri" italic className="w-[137px]" />
        <Combo label="Font Size" value="14 pt" className="mr-[5px] ml-[5px] w-[67px]" />
        <ToolGroups groups={FORMATTING} />
      </div>

      <div className="flex min-h-0 flex-1">
        <div className="flex min-w-0 flex-1 flex-col">
          <div className="flex h-[27px] shrink-0 items-center pl-[3px]">
            <Combo label="Name Box" value="A1:H1" className="w-[107px]" />
            <button aria-label="Function Wizard" className="ml-2 flex w-[14px] justify-center">
              {fx}
            </button>
            <button aria-label="Select Function" className="flex w-4 items-center justify-center">
              <svg viewBox="0 0 10 12" className="h-3 w-[10px]" fill="none" stroke={GREY}>
                <path d="M9 3v-2h-8l4.500 5-4.500 5h8v-2" />
              </svg>
            </button>
            <button aria-label="Select Function options" className="flex w-2 justify-center text-[#222]">
              <Caret className="h-[3px] w-[5px]" />
            </button>
            <button aria-label="Formula" className="flex w-[17px] flex-col items-center gap-[2px]">
              <span className="h-[2px] w-2 bg-[#666]" />
              <span className="h-[2px] w-2 bg-[#666]" />
            </button>
            <input
              aria-label="Input line"
              defaultValue="Synthèse — Tableau à double entrée : CA HT par Commercial × Famille de produits"
              className="h-[17px] min-w-0 flex-1 border border-[#dad7d5] bg-white pl-1 text-[9px] text-[#4a4a4a] outline-none"
            />
            <button aria-label="Expand Formula Bar" className="flex w-[15px] justify-center pr-1 text-[#222]">
              <Caret className="h-1 w-2" />
            </button>
          </div>

          <div className="mt-[3px] flex min-h-0 flex-1">
            <div className="flex min-w-0 flex-1 flex-col">
              <main className="relative min-h-0 flex-1 overflow-hidden bg-white">
                <SheetGrid />
                <BarChart />
                <PieChart />
              </main>
              <div className="flex h-[9px] shrink-0 items-center justify-between bg-[#cdcdcd] px-[2px]">
                <span className="h-[6px] w-[47.3%] rounded-full bg-[#808080]" />
                <span className="h-[6px] w-px bg-[#333]" />
              </div>
            </div>
            <div className="mb-[9px] flex w-[10px] shrink-0 flex-col items-center bg-[#cdcdcd] pt-px">
              <span className="h-px w-[6px] bg-[#333]" />
              <span className="mt-[2px] h-[48%] w-[6px] rounded-full bg-[#808080]" />
            </div>
          </div>

          <SheetTabs />
        </div>

        <aside className="relative flex w-[38px] shrink-0 flex-col items-center border-l border-[#d8d6d4] pt-[7px]">
          <button aria-label="Sidebar Settings" className="flex h-4 w-4 flex-col items-center justify-center gap-[3px]">
            <span className="h-px w-[9px] bg-[#333]" />
            <span className="h-px w-[9px] bg-[#333]" />
            <span className="h-px w-[9px] bg-[#333]" />
          </button>
          <div className="mt-[14px] flex flex-col items-center gap-[13px]">
            {SIDEBAR.map((deck) => (
              <button key={deck.label} aria-label={deck.label} className="flex h-4 items-center">
                {deck.icon}
              </button>
            ))}
          </div>
          <button
            aria-label="Hide sidebar"
            className="absolute top-[269px] -left-px flex h-[50px] w-[5px] items-center justify-center bg-[#929292]"
          >
            <svg viewBox="0 0 4 6" className="h-[6px] w-1" fill="#fff">
              <path d="M0 0l4 3-4 3z" />
            </svg>
          </button>
        </aside>
      </div>

      <StatusBar />
    </div>
  );
}
